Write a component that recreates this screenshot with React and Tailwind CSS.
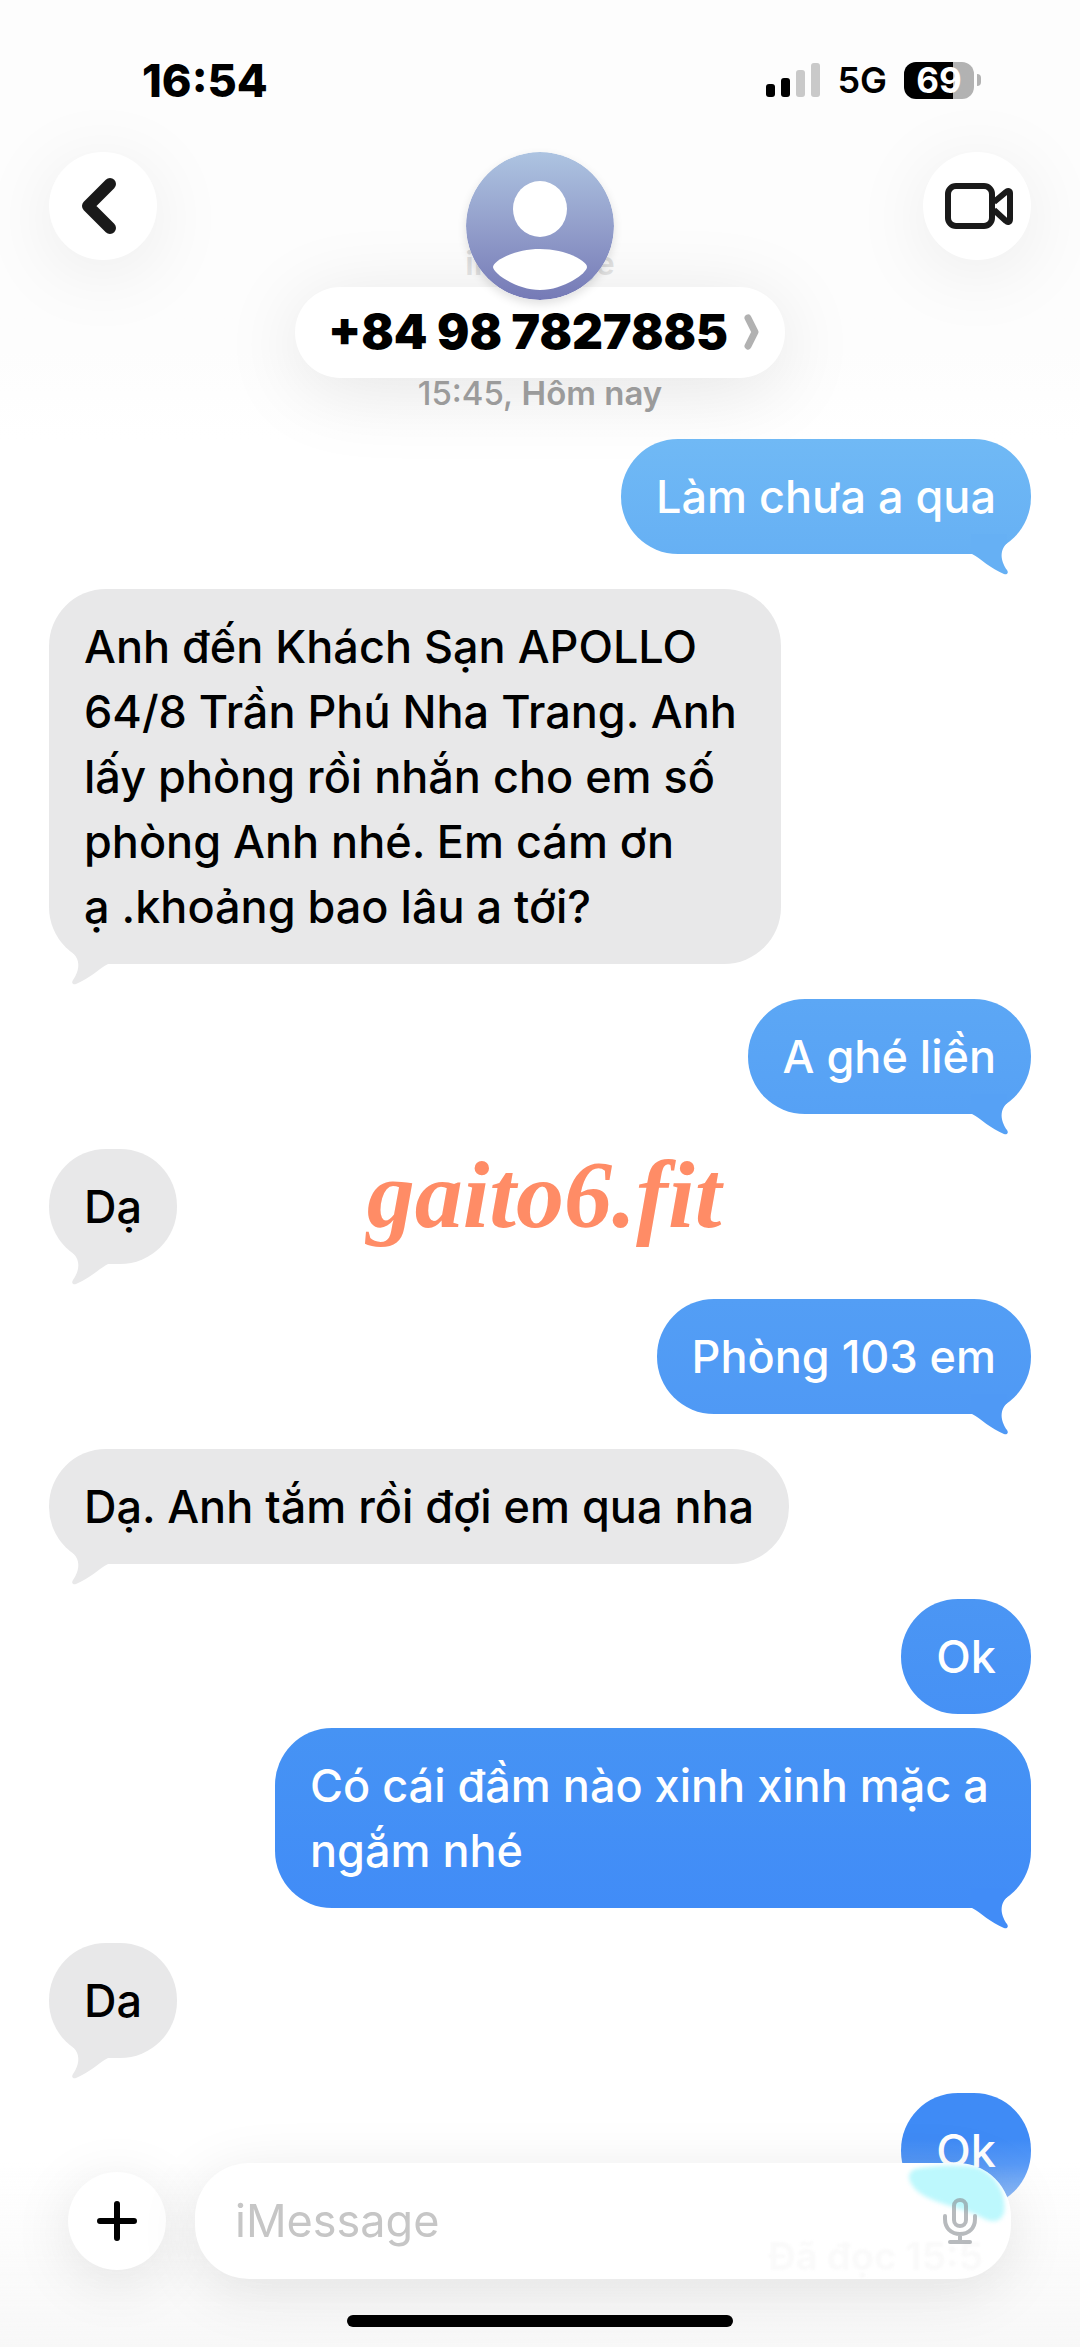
import React from 'react';

const MESSAGES = [
  { from: 'me', text: 'Làm chưa a qua', fill: 'bg-linear-to-b from-[#70b9f5] to-[#66b0f4]', tail: 'text-[#66b0f4]' },
  {
    from: 'them',
    text: 'Anh đến Khách Sạn APOLLO 64/8 Trần Phú Nha Trang. Anh lấy phòng rồi nhắn cho em số phòng Anh nhé. Em cám ơn ạ\u00a0.khoảng bao lâu a tới?',
    width: 'max-w-[732px]',
  },
  { from: 'me', text: 'A ghé liền', fill: 'bg-linear-to-b from-[#5ca7f5] to-[#56a1f5]', tail: 'text-[#56a1f5]' },
  { from: 'them', text: 'Dạ' },
  { from: 'me', text: 'Phòng 103 em', fill: 'bg-linear-to-b from-[#539ef5] to-[#4f99f5]', tail: 'text-[#4f99f5]' },
  { from: 'them', text: 'Dạ. Anh tắm rồi đợi em qua nha' },
  { from: 'me', text: 'Ok', fill: 'bg-linear-to-b from-[#4b96f4] to-[#4691f5]', grouped: true },
  { from: 'me', text: 'Có cái đầm nào xinh xinh mặc a ngắm nhé', fill: 'bg-linear-to-b from-[#4693f4] to-[#418cf7]', tail: 'text-[#418cf7]' },
  { from: 'them', text: 'Da' },
  { from: 'me', text: 'Ok', fill: 'bg-linear-to-b from-[#3f8bf6] from-40% to-[#7db1f8]' },
];

const Tail = ({ side, className }) => (
  <svg
    viewBox="0 0 60 42"
    className={`absolute top-full -mt-5 h-[42px] w-[60px] ${side === 'left' ? 'left-0 -scale-x-100' : 'right-0'} ${className}`}
    fill="currentColor"
    aria-hidden="true"
  >
    <path d="M0 0V20H1C9 24 20 35 33 40C36 41 38 39 36 36C31 29 27 18 36 9V0Z" />
  </svg>
);

const Bubble = ({ message }) => {
  const mine = message.from === 'me';
  return (
    <li className={`flex ${mine ? 'justify-end' : 'justify-start'} ${message.grouped ? 'mb-3.5' : 'mb-[35px]'}`}>
      <div
        className={`relative rounded-[57px] px-[35px] py-[25px] ${message.width || 'max-w-[756px]'} ${
          mine ? `${message.fill} text-white` : 'bg-[#e8e8e9] text-black'
        }`}
      >
        {!mine && <Tail side="left" className="text-[#e8e8e9]" />}
        {mine && message.tail && <Tail side="right" className={message.tail} />}
        <p className="relative text-[45px] leading-[65px] font-medium">{message.text}</p>
      </div>
    </li>
  );
};

const StatusBar = () => (
  <div className="flex h-[108px] items-center justify-between pt-[52px] pr-[99px] pl-[142px]">
    <span className="text-[45px] leading-none font-extrabold">16:54</span>
    <div className="flex items-center gap-[17px]">
      <svg viewBox="0 0 54 34" className="h-[34px] w-[54px]" aria-hidden="true">
        <rect x="0" y="21" width="9" height="13" rx="3" />
        <rect x="15" y="15" width="9" height="19" rx="3" />
        <rect x="30" y="7" width="9" height="27" rx="3" fill="#c9c9c9" />
        <rect x="45" y="0" width="9" height="34" rx="3" fill="#c9c9c9" />
      </svg>
      <span className="text-[36px] leading-none font-semibold">5G</span>
      <div className="flex items-center gap-[3px]">
        <div className="flex h-[37px] w-[70px] items-center justify-center rounded-xl bg-linear-to-r from-black from-70% to-[#b2b2b2] to-70%">
          <span className="text-[35px] leading-none font-bold text-white">69</span>
        </div>
        <div className="h-3 w-1 rounded-r-full bg-[#b2b2b2]" />
      </div>
    </div>
  </div>
);

const Header = () => (
  <header className="bg-linear-to-b from-[#fdfdfd] from-80% to-white pb-[31px]">
    <StatusBar />
    <div className="flex items-start justify-between px-[49px] pt-11">
      <button
        type="button"
        aria-label="Quay lại"
        className="flex size-[108px] items-center justify-center rounded-full bg-white shadow-[0_12px_80px_rgba(0,0,0,0.08)]"
      >
        <svg viewBox="0 0 108 108" className="size-[108px]" fill="none" stroke="#1a1a1a" strokeWidth="12" strokeLinecap="round" strokeLinejoin="round">
          <path d="M61 32L39 54L61 76" />
        </svg>
      </button>

      <div className="relative flex flex-col items-center">
        {/* scrolled-under service label, faded behind the avatar */}
        <span className="absolute top-[96px] text-[32px] leading-none font-semibold text-[#dedede]">iMessage</span>
        <svg viewBox="0 0 148 148" className="relative z-10 size-[148px] rounded-full shadow-[0_4px_10px_rgba(0,0,0,0.12)]" aria-hidden="true">
          <defs>
            <linearGradient id="avatar" x1="0" y1="0" x2="0" y2="1">
              <stop offset="0" stopColor="#adc4e1" />
              <stop offset="0.5" stopColor="#939fcb" />
              <stop offset="1" stopColor="#757ab6" />
            </linearGradient>
          </defs>
          <circle cx="74" cy="74" r="74" fill="url(#avatar)" />
          <ellipse cx="74" cy="57" rx="27" ry="28" fill="#fff" />
          <path d="M27 115C27 109 48 97 74 97S121 109 121 115C121 121 98 138 74 138S27 121 27 115Z" fill="#fff" />
        </svg>
        <button
          type="button"
          className="-mt-[13px] flex h-[91px] items-center gap-4 rounded-full bg-white pr-[26px] pb-0.5 pl-[33px] shadow-[0_12px_80px_rgba(0,0,0,0.10)]"
        >
          <span className="text-[48px] leading-none font-black whitespace-nowrap">+84 98 7827885</span>
          <svg viewBox="0 0 15 36" className="h-9 w-[15px]" fill="none" stroke="#b1b1b1" strokeWidth="7" strokeLinecap="round" strokeLinejoin="round">
            <path d="M4 4L11 18L4 32" />
          </svg>
        </button>
        <p className="relative text-[33px] leading-[30px] font-medium text-[#9b9b9b]">
          15:45, <span className="font-semibold">Hôm nay</span>
        </p>
      </div>

      <button
        type="button"
        aria-label="Gọi video"
        className="flex size-[108px] items-center justify-center rounded-full bg-white shadow-[0_12px_80px_rgba(0,0,0,0.08)]"
      >
        <svg viewBox="0 0 108 108" className="size-[108px]" fill="none" stroke="#1a1a1a" strokeWidth="6" strokeLinejoin="round">
          <rect x="25" y="34" width="44" height="40" rx="8" />
          <path d="M71 50L83 40C85 38 87 39 87 41V67C87 70 85 71 83 69L71 58" />
        </svg>
      </button>
    </div>
  </header>
);

const Composer = () => (
  <footer className="fixed inset-x-0 bottom-0 bg-linear-to-b from-transparent to-[#f8f8f8] pb-5">
    <form className="flex items-center gap-[29px] pr-[69px] pl-[68px]" onSubmit={(e) => e.preventDefault()}>
      <button
        type="button"
        aria-label="Thêm"
        className="flex size-[98px] shrink-0 items-center justify-center rounded-full bg-white shadow-[0_12px_60px_rgba(0,0,0,0.10)]"
      >
        <svg viewBox="0 0 40 40" className="size-10" stroke="#000" strokeWidth="6" strokeLinecap="round">
          <path d="M20 3V37M3 20H37" />
        </svg>
      </button>
      <div className="relative flex h-[116px] min-w-0 flex-1 items-center overflow-hidden rounded-[54px] bg-white shadow-[0_12px_60px_rgba(0,0,0,0.10)]">
        {/* light bent through the glass from the bubble underneath */}
        <svg viewBox="0 0 110 70" className="absolute top-0 right-0 h-[70px] w-[110px]" aria-hidden="true">
          <path d="M14 6C30 2 65 1 78 5C95 12 106 30 103 50C98 63 86 58 76 52C58 44 28 40 14 26C7 18 5 10 14 6Z" fill="#bdf8fd" className="blur-[2px]" />
        </svg>
        <span className="absolute right-7 bottom-1 text-[38px] leading-none font-bold text-[#fafafa] blur-[1px]" aria-hidden="true">
          Đã đọc 15:5
        </span>
        <input
          type="text"
          aria-label="iMessage"
          placeholder="iMessage"
          className="relative min-w-0 flex-1 bg-transparent pl-10 text-[45px] outline-none placeholder:text-[#c6c6c6]"
        />
        <button type="button" aria-label="Ghi âm" className="relative mr-[34px]">
          <svg viewBox="0 0 34 48" className="h-12 w-[34px]" fill="none" stroke="#8b9095" strokeOpacity="0.62" strokeWidth="4" strokeLinecap="round">
            <path d="M11 9C11 1 23 1 23 9V23C23 31 11 31 11 23ZM2 19V22C2 31 8 37 17 37S32 31 32 22V19M17 39V43M7 45H27" />
          </svg>
        </button>
      </div>
    </form>
    <div className="mx-auto mt-9 h-3 w-[386px] rounded-full bg-black" />
  </footer>
);

export default function App() {
  return (
    <div className="relative min-h-screen overflow-hidden bg-white font-['Inter','Noto_Sans',sans-serif] text-black">
      <Header />
      <main className="relative px-[49px]">
        <ul>
          {MESSAGES.map((message, i) => (
            <Bubble key={i} message={message} />
          ))}
        </ul>
        <span className="absolute top-[706px] left-1/2 ml-1 -translate-x-1/2 font-['Liberation_Serif',serif] text-[96px] leading-[100px] font-bold text-[#ff8c66] italic">
          gaito6.fit
        </span>
      </main>
      <Composer />
    </div>
  );
}
